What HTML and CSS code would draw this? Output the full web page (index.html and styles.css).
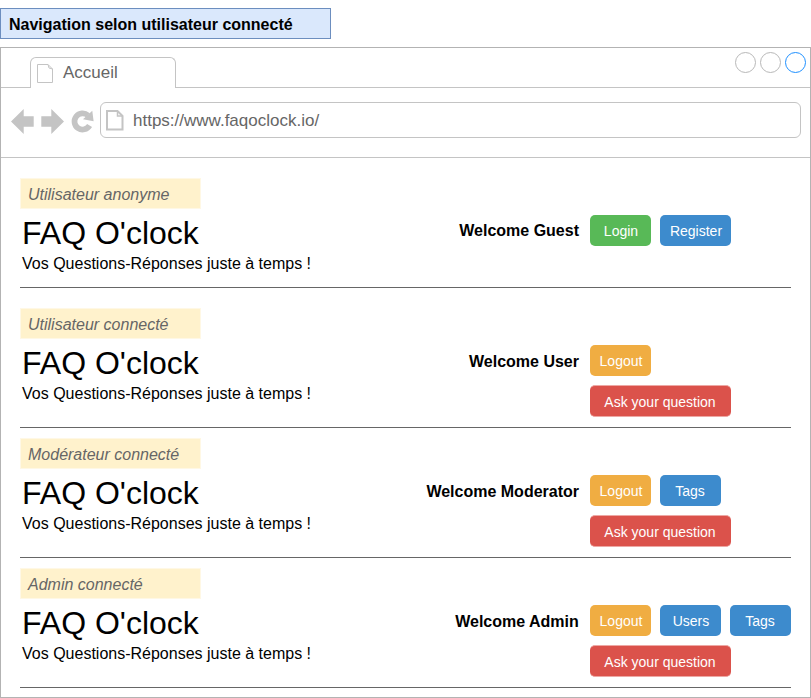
FILE: index.html
```html
<!DOCTYPE html>
<html lang="fr">
<head>
<meta charset="utf-8">
<title>FAQ O'clock</title>
<link rel="stylesheet" href="styles.css">
</head>
<body>
<h1 class="page-title">Navigation selon utilisateur connecté</h1>
<div class="browser">
  <div class="tabbar">
    <div class="tab">
      <svg class="tab-icon" width="17" height="20" viewBox="0 0 17 20" fill="none" stroke="#c4c4c4"><path d="M.5 .5H11L15.500 5V18.500H.5Z M11 .5L12 4L15.500 5"/></svg>
      <span>Accueil</span>
    </div>
    <div class="window-buttons"><i class="dot"></i><i class="dot"></i><i class="dot dot-active"></i></div>
  </div>
  <div class="toolbar">
    <svg class="nav-icons" width="84" height="26" viewBox="10 108 84 26" fill="#c4c4c4">
      <path d="M11 121.500L23.700 109V116.300H33.700V126.700H23.700V134Z"/>
      <path d="M64 121.500L51.300 109V116.300H41.300V126.700H51.300V134Z"/>
      <path d="M89.600 125.500A8.100 8.100 0 1 1 88 115.400" fill="none" stroke="#c4c4c4" stroke-width="5.700"/>
      <path d="M92.300 110.800L93.600 121.300L83 119.200Z"/>
    </svg>
    <div class="address">
      <svg class="page-icon" width="18" height="21" viewBox="0 0 18 21" fill="none" stroke="#c4c4c4"><path stroke-width="2" d="M1 1H11.500L16.500 6V19.500H1Z"/><path stroke-width="1.500" d="M11.500 1V6H16.500"/></svg>
      <span>https://www.faqoclock.io/</span>
    </div>
  </div>
  <main>
    <section class="state tall-top short-bottom">
      <div class="brand">
        <div class="role">Utilisateur anonyme</div>
        <h2>FAQ O'clock</h2>
        <p>Vos Questions-Réponses juste à temps !</p>
      </div>
      <div class="welcome raised">Welcome Guest</div>
      <nav><a class="btn green">Login</a><a class="btn blue wide">Register</a></nav>
    </section>
    <section class="state tall-top">
      <div class="brand">
        <div class="role">Utilisateur connecté</div>
        <h2>FAQ O'clock</h2>
        <p>Vos Questions-Réponses juste à temps !</p>
      </div>
      <div class="welcome">Welcome User</div>
      <nav><a class="btn orange">Logout</a><a class="btn red">Ask your question</a></nav>
    </section>
    <section class="state">
      <div class="brand">
        <div class="role">Modérateur connecté</div>
        <h2>FAQ O'clock</h2>
        <p>Vos Questions-Réponses juste à temps !</p>
      </div>
      <div class="welcome">Welcome Moderator</div>
      <nav><a class="btn orange">Logout</a><a class="btn blue tags">Tags</a><a class="btn red">Ask your question</a></nav>
    </section>
    <section class="state">
      <div class="brand">
        <div class="role">Admin connecté</div>
        <h2>FAQ O'clock</h2>
        <p>Vos Questions-Réponses juste à temps !</p>
      </div>
      <div class="welcome admin">Welcome Admin</div>
      <nav><a class="btn orange">Logout</a><a class="btn blue">Users</a><a class="btn blue tags">Tags</a><a class="btn red">Ask your question</a></nav>
    </section>
  </main>
</div>
</body>
</html>
```
FILE: styles.css
```css
* { box-sizing: border-box; }
body {
  margin: 0;
  padding-top: 8px;
  background: #fff;
  color: #000;
  font: 16px/18px "Liberation Sans", Arial, sans-serif;
}
h2, p { margin: 0; font-weight: normal; }
.page-title {
  width: 331px;
  height: 31px;
  margin: 0 0 8px;
  padding: 7px 8px 0;
  border: 1px solid #6c8ebf;
  background: #dae8fc;
  font-size: 16px;
  line-height: 18px;
}
.browser {
  height: 651px;
  border: 1px solid #b3b3b3;
}
.tabbar {
  display: flex;
  justify-content: space-between;
  height: 40px;
  padding: 9px 4px 0 29px;
  border-bottom: 1px solid #c4c4c4;
}
.tab {
  display: flex;
  width: 146px;
  height: 31px;
  padding: 6px 0 0 6px;
  border: 1px solid #c4c4c4;
  border-bottom: 0;
  border-radius: 6px 6px 0 0;
  background: #fff;
  color: #666;
  font-size: 17px;
}
.tab span { margin-left: 9px; }
.window-buttons { display: flex; gap: 4px; margin-top: -5px; }
.dot {
  width: 21px;
  height: 21px;
  border: 1px solid #b8b8b8;
  border-radius: 50%;
}
.dot-active { border-color: #1e90ff; }
.toolbar {
  display: flex;
  height: 70px;
  padding: 14px 9px 0;
  border-bottom: 1px solid #c4c4c4;
}
.nav-icons { margin-top: 6px; }
.address {
  display: flex;
  flex: 1;
  height: 36px;
  margin-left: 6px;
  padding: 7px 0 0 5px;
  border: 1px solid #c4c4c4;
  border-radius: 6px;
  color: #666;
  font-size: 17px;
}
.address span { margin: 2px 0 0 9px; }
.state {
  display: grid;
  grid-template-columns: 290px 1fr 201px;
  height: 130px;
  margin: 0 19px;
  padding-top: 10px;
  border-bottom: 1px solid #666;
}
.tall-top { height: 140px; padding-top: 20px; }
.short-bottom { height: 130px; }
.role {
  width: 181px;
  height: 31px;
  padding: 7px 7px 0;
  border: 1px solid #fff8e5;
  background: #fff2cc;
  color: #666;
  font-style: italic;
}
h2 {
  margin: 6px 0 0 2px;
  font-size: 32px;
  line-height: 37px;
}
p { margin: 3px 0 0 2px; white-space: nowrap; }
.welcome {
  margin-top: 45px;
  padding-right: 11px;
  text-align: right;
  font-weight: bold;
}
.raised { margin-top: 44px; }
.admin { padding-right: 11.250px; }
nav {
  display: flex;
  flex-wrap: wrap;
  align-content: flex-start;
  gap: 9px;
  padding-top: 37px;
}
.btn {
  width: 61px;
  height: 31px;
  padding-left: 1px;
  border-radius: 5px;
  color: #fff;
  font-size: 14px;
  line-height: 32px;
  text-align: center;
}
.wide { width: 71px; }
.tags { padding: 0 1px 0 0; }
.green { background: #58b957; }
.blue { background: #3d8bcd; }
.orange { background: #f0ad42; }
.red {
  width: 141px;
  height: 32px;
  padding: 0 1px 0 0;
  border: solid #eda8a4;
  border-width: 1px 0;
  background: #db524b;
}
```
